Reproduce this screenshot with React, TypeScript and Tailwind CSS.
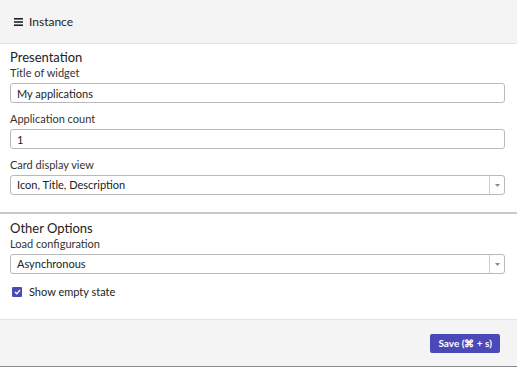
import React, { useState } from "react";

const Field = ({ label, children }: { label: string; children: React.ReactNode }) => (
  <div className="flex flex-col">
    <label className="text-[11px] leading-[13px] text-[#333] mb-[4px]">{label}</label>
    {children}
  </div>
);

const TextInput = ({ value }: { value: string }) => (
  <input
    defaultValue={value}
    className="h-[20px] w-full rounded-[3px] border border-[#b9b9bd] bg-white px-[6px] text-[11px] text-[#222] outline-none"
  />
);

const SelectBox = ({ value }: { value: string }) => (
  <div className="flex h-[20px] w-full items-stretch rounded-[3px] border border-[#b9b9bd] bg-white">
    <div className="flex flex-1 items-center px-[6px] text-[11px] text-[#222]">{value}</div>
    <div className="flex w-[15px] items-center justify-center border-l border-[#cfcfd3]">
      <svg width="5" height="3" viewBox="0 0 5 3">
        <path d="M0 0h5L2.5 3z" fill="#888" />
      </svg>
    </div>
  </div>
);

export default function App() {
  const [showEmpty, setShowEmpty] = useState(true);

  return (
    <div className="flex h-[367px] w-[517px] flex-col bg-white font-['Lato',sans-serif] text-[#222] border-b border-[#8a8a8a]">
      <div className="flex h-[44px] shrink-0 items-center gap-[6px] border-b border-[#e2e2e4] bg-[#f4f4f5] px-[14px]">
        <svg width="9" height="8" viewBox="0 0 9 8">
          <rect x="0" y="0" width="9" height="1.6" fill="#222" />
          <rect x="0" y="3.2" width="9" height="1.6" fill="#222" />
          <rect x="0" y="6.4" width="9" height="1.6" fill="#222" />
        </svg>
        <span className="text-[12px]">Instance</span>
      </div>

      <div className="flex shrink-0 flex-col pl-[10px] pr-[12px] pt-[5px] pb-[17px]">
        <h2 className="text-[13px] leading-[16px] mb-[1px]">Presentation</h2>
        <div className="flex flex-col gap-[9px]">
          <Field label="Title of widget">
            <TextInput value="My applications" />
          </Field>
          <Field label="Application count">
            <TextInput value="1" />
          </Field>
          <Field label="Card display view">
            <SelectBox value="Icon, Title, Description" />
          </Field>
        </div>
      </div>

      <div className="h-[2px] shrink-0 bg-[#c9c9cc]" />

      <div className="flex flex-1 flex-col pl-[10px] pr-[12px] pt-[6px]">
        <h2 className="text-[13px] leading-[16px] mb-[1px]">Other Options</h2>
        <Field label="Load configuration">
          <SelectBox value="Asynchronous" />
        </Field>
        <label className="mt-[10px] ml-[2px] flex items-center gap-[7px] text-[11px]">
          <button
            onClick={() => setShowEmpty(!showEmpty)}
            className={`flex h-[10px] w-[10px] items-center justify-center rounded-[1px] ${showEmpty ? "bg-[#4b48b8]" : "border border-[#999]"}`}
          >
            {showEmpty && (
              <svg width="7" height="6" viewBox="0 0 7 6">
                <path d="M1 3l1.8 1.8L6 1" stroke="#fff" strokeWidth="1.3" fill="none" />
              </svg>
            )}
          </button>
          Show empty state
        </label>
      </div>

      <div className="flex h-[47px] shrink-0 items-center justify-end border-t border-[#e2e2e4] bg-[#f4f4f5] px-[17px]">
        <button className="h-[19px] rounded-[2px] bg-[#4b48b8] px-[8px] text-[10px] font-bold text-white">
          Save (⌘ + s)
        </button>
      </div>
    </div>
  );
}
